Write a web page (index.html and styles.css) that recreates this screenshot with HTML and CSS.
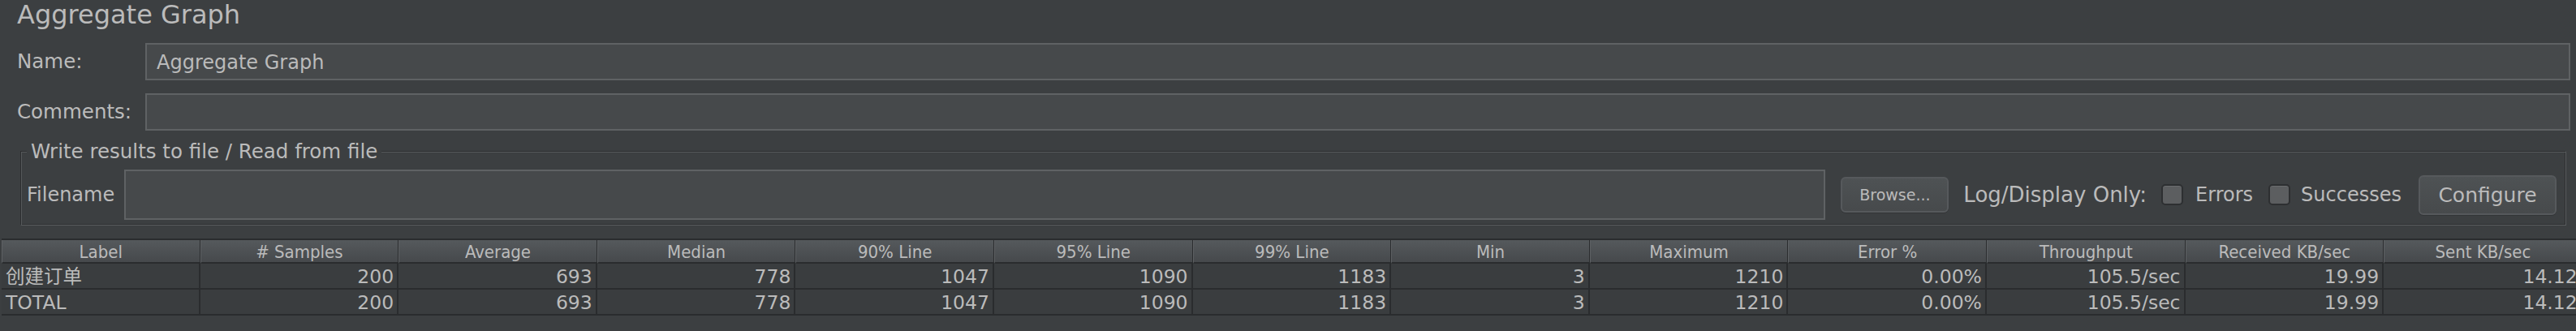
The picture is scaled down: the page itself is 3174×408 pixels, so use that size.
FILE: index.html
```html
<!DOCTYPE html>
<html lang="en">
<head>
<meta charset="utf-8">
<title>Aggregate Graph</title>
<link rel="stylesheet" href="styles.css">
</head>
<body>
<div class="panel">
  <div class="title">Aggregate Graph</div>
  <div class="form-row">
    <label class="row-label">Name:</label>
    <div class="field">Aggregate Graph</div>
  </div>
  <div class="form-row">
    <label class="row-label">Comments:</label>
    <div class="field"></div>
  </div>
  <section class="group">
    <span class="group-title">Write results to file / Read from file</span>
    <div class="file-row">
      <span class="file-label">Filename</span>
      <div class="field file-field"></div>
      <button class="btn btn-browse" type="button">Browse...</button>
      <span class="log-label">Log/Display Only:</span>
      <span class="check check-errors"><span class="box"></span>Errors</span>
      <span class="check check-success"><span class="box"></span>Successes</span>
      <button class="btn btn-config" type="button">Configure</button>
    </div>
  </section>
</div>
<div class="table">
  <div class="thead">
    <div class="th">Label</div>
    <div class="th"># Samples</div>
    <div class="th">Average</div>
    <div class="th">Median</div>
    <div class="th">90% Line</div>
    <div class="th">95% Line</div>
    <div class="th">99% Line</div>
    <div class="th">Min</div>
    <div class="th">Maximum</div>
    <div class="th">Error %</div>
    <div class="th">Throughput</div>
    <div class="th">Received KB/sec</div>
    <div class="th">Sent KB/sec</div>
  </div>
  <div class="trow">
    <div class="td td-label">创建订单</div>
    <div class="td">200</div>
    <div class="td">693</div>
    <div class="td">778</div>
    <div class="td">1047</div>
    <div class="td">1090</div>
    <div class="td">1183</div>
    <div class="td">3</div>
    <div class="td">1210</div>
    <div class="td">0.00%</div>
    <div class="td">105.5/sec</div>
    <div class="td">19.99</div>
    <div class="td">14.12</div>
  </div>
  <div class="trow">
    <div class="td td-label">TOTAL</div>
    <div class="td">200</div>
    <div class="td">693</div>
    <div class="td">778</div>
    <div class="td">1047</div>
    <div class="td">1090</div>
    <div class="td">1183</div>
    <div class="td">3</div>
    <div class="td">1210</div>
    <div class="td">0.00%</div>
    <div class="td">105.5/sec</div>
    <div class="td">19.99</div>
    <div class="td">14.12</div>
  </div>
</div>
</body>
</html>
```
FILE: styles.css
```css
html, body {
  margin: 0;
  padding: 0;
  background: #3c3f41;
  overflow: hidden;
}
body {
  width: 3174px;
  height: 408px;
  color: #bbbbbb;
  font-family: "DejaVu Sans", "Noto Sans CJK SC", sans-serif;
}
.panel {
  padding: 0 7px 0 21px;
}
.title {
  font-size: 32px;
  line-height: 37px;
  height: 37px;
  white-space: nowrap;
}
.form-row {
  display: grid;
  grid-template-columns: 158px 1fr;
  align-items: center;
  margin-top: 16px;
}
.row-label {
  font-size: 24.5px;
  line-height: 28px;
  white-space: nowrap;
}
.field {
  box-sizing: border-box;
  height: 46px;
  border: 2px solid #5f6264;
  background: #46494b;
  padding: 2px 12px 0;
  font-size: 24px;
  line-height: 40px;
  white-space: nowrap;
}
.group {
  position: relative;
  margin: 25px 5px 0 4px;
  padding: 22px 11px 6px 7px;
  border: 1px solid;
  border-color: #2c2e30 #595c5e #595c5e #2c2e30;
  box-shadow: inset 1px 1px 0 #56595b, inset -1px -1px 0 #2e3032;
}
.group-title {
  position: absolute;
  left: 7px;
  top: -14px;
  padding: 0 5px;
  background: #3c3f41;
  font-size: 24.5px;
  line-height: 28px;
  white-space: nowrap;
}
.file-row {
  display: flex;
  align-items: center;
  height: 62px;
  font-size: 24.5px;
  white-space: nowrap;
}
.file-label {
  font-size: 24px;
  margin-right: 12px;
}
.file-field {
  flex: 1;
  height: 62px;
  margin-right: 19px;
}
.btn {
  box-sizing: border-box;
  font-family: "DejaVu Sans", sans-serif;
  color: #bbbbbb;
  background: linear-gradient(#4e5254, #474a4c);
  border: 2px solid #56595c;
  border-radius: 6px;
  padding: 0;
  box-shadow: 0 1px 0 #333537;
}
.btn-browse {
  width: 133px;
  height: 44px;
  font-size: 19px;
  margin-right: 18px;
}
.btn-config {
  width: 170px;
  height: 49px;
  font-size: 25px;
}
.log-label {
  font-size: 26px;
  margin-right: 18px;
}
.check {
  display: inline-flex;
  align-items: center;
  font-size: 24px;
}
.box {
  display: inline-block;
  box-sizing: border-box;
  width: 27px;
  height: 26px;
  border: 2px solid #2d2f31;
  border-radius: 5px;
  background: #5c5e60;
  box-shadow: inset 0 1px 0 #6a6c6e;
}
.check-errors .box {
  margin-right: 15px;
}
.check-errors {
  margin-right: 19px;
}
.check-success .box {
  margin-right: 13px;
}
.check-success {
  margin-right: 21px;
}
.table {
  margin-top: 16px;
  margin-left: 2px;
  width: 3180px;
  border-top: 2px solid #2a2c2e;
}
.thead,
.trow {
  display: grid;
  grid-template-columns: repeat(13, 244.6px);
}
.th {
  box-sizing: border-box;
  height: 29px;
  padding-top: 2px;
  border-right: 1px solid #2b2d2f;
  border-left: 1px solid #5d6063;
  border-bottom: 2px solid #2a2c2e;
  background: linear-gradient(#55595c, #46494c);
  font-family: "DejaVu Sans Condensed", "DejaVu Sans", sans-serif;
  font-stretch: condensed;
  font-size: 22px;
  line-height: 25px;
  text-align: center;
  white-space: nowrap;
  overflow: hidden;
}
.td {
  box-sizing: border-box;
  height: 32px;
  padding: 2px 4px 0 5px;
  border-right: 2px solid #2a2c2e;
  border-bottom: 2px solid #2a2c2e;
  background: #3a3d3f;
  font-size: 23.5px;
  line-height: 28px;
  text-align: right;
  white-space: nowrap;
  overflow: hidden;
}
.td-label {
  text-align: left;
}
```
